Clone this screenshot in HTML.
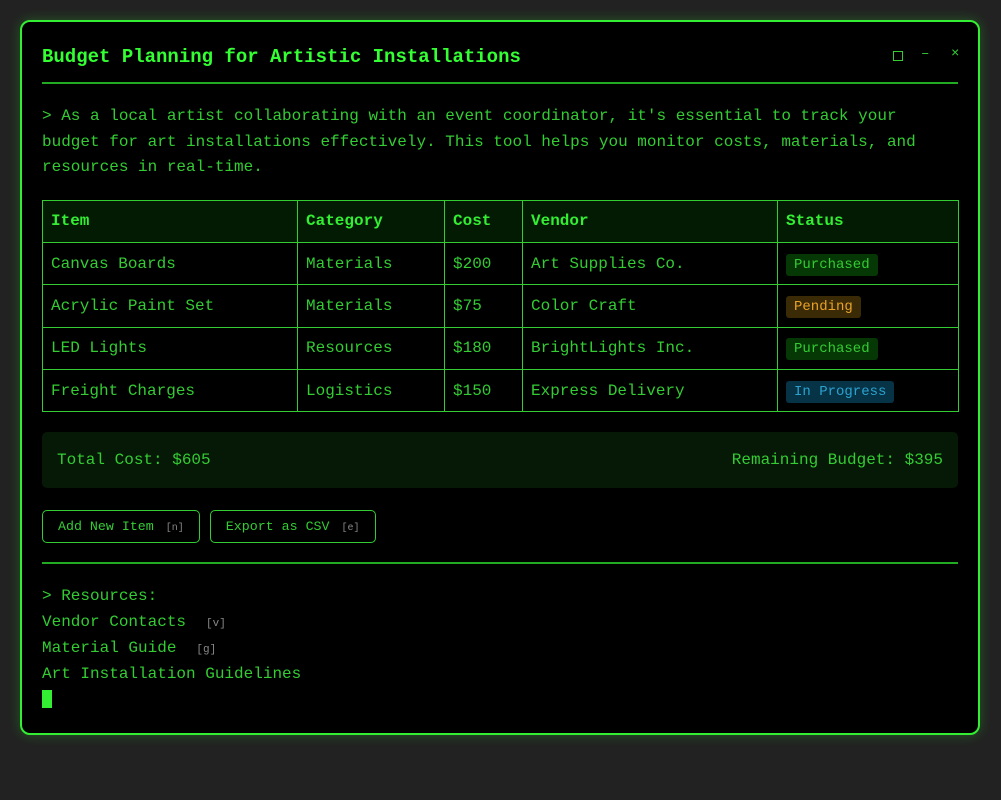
<!DOCTYPE html>
<html><head><style>
body{margin:0;background:#222;width:1001px;height:800px;font-family:"Liberation Mono","Courier New",monospace;color:#3c3;}
.win{position:absolute;left:20px;top:20px;width:916px;height:671px;border:2px solid #3e3;border-radius:10px;background:#000;padding:20px;box-shadow:0 0 12px rgba(50,255,50,.25);}
h1{margin:0;font-size:19px;color:#3f3;font-weight:bold;height:40px;line-height:31px;border-bottom:2px solid #2a2;}
.ctl{position:absolute;top:24px;font-size:14px;color:#3c3;}
.box{position:absolute;left:871px;top:29px;width:8px;height:8px;border:1px solid #3c3}
p{margin:20px 0 0;font-size:16px;line-height:25.5px;}
table{border-collapse:collapse;margin-top:19px;width:917px;font-size:16px;}
td,th{border:1px solid #3c3;padding:0 8px;height:41.4px;text-align:left}
th{background:#031a03;color:#3e3;}
.b{font-size:14px;padding:3px 8px;border-radius:3px}
.p{background:#063806;color:#3c3}.n{background:#3a2a06;color:#e9a227}.g{background:#073347;color:#2aa3d0}
.sum{margin-top:20px;height:56px;background:#061806;border-radius:5px;display:flex;justify-content:space-between;align-items:center;padding:0 15px;font-size:16px}
.btns{margin-top:22px;display:flex;gap:10px}
.btn{border:1.5px solid #3c3;border-radius:5px;height:31px;line-height:31px;padding:0 15px;font-size:13.3px}
.k{font-size:10px;color:#888;margin-left:12px}
hr{border:0;border-top:2px solid #2a2;margin:19px 0 0}
.r{font-size:16px}
.r div{height:25.7px;line-height:25.7px}
.r .k{font-size:11px;margin-left:20px}
.cur{display:inline-block;width:10px;height:18px;background:#3e3;margin-top:3px}
</style></head><body>
<div class="win">
<h1>Budget Planning for Artistic Installations</h1>
<div class="box"></div><div class="ctl" style="left:899px">–</div><div class="ctl" style="left:929px">×</div>
<p>&gt; As a local artist collaborating with an event coordinator, it's essential to track your budget for art installations effectively. This tool helps you monitor costs, materials, and resources in real-time.</p>
<table>
<tr><th style="width:238px">Item</th><th style="width:130px">Category</th><th style="width:61px">Cost</th><th style="width:238px">Vendor</th><th>Status</th></tr>
<tr><td>Canvas Boards</td><td>Materials</td><td>$200</td><td>Art Supplies Co.</td><td><span class="b p">Purchased</span></td></tr>
<tr><td>Acrylic Paint Set</td><td>Materials</td><td>$75</td><td>Color Craft</td><td><span class="b n">Pending</span></td></tr>
<tr><td>LED Lights</td><td>Resources</td><td>$180</td><td>BrightLights Inc.</td><td><span class="b p">Purchased</span></td></tr>
<tr><td>Freight Charges</td><td>Logistics</td><td>$150</td><td>Express Delivery</td><td><span class="b g">In Progress</span></td></tr>
</table>
<div class="sum"><span>Total Cost: $605</span><span>Remaining Budget: $395</span></div>
<div class="btns"><div class="btn">Add New Item<span class="k">[n]</span></div><div class="btn">Export as CSV<span class="k">[e]</span></div></div>
<hr>
<div class="r" style="margin-top:20px"><div>&gt; Resources:</div><div>Vendor Contacts<span class="k">[v]</span></div><div>Material Guide<span class="k">[g]</span></div><div>Art Installation Guidelines</div><span class="cur"></span></div>
</div>
</body></html>
